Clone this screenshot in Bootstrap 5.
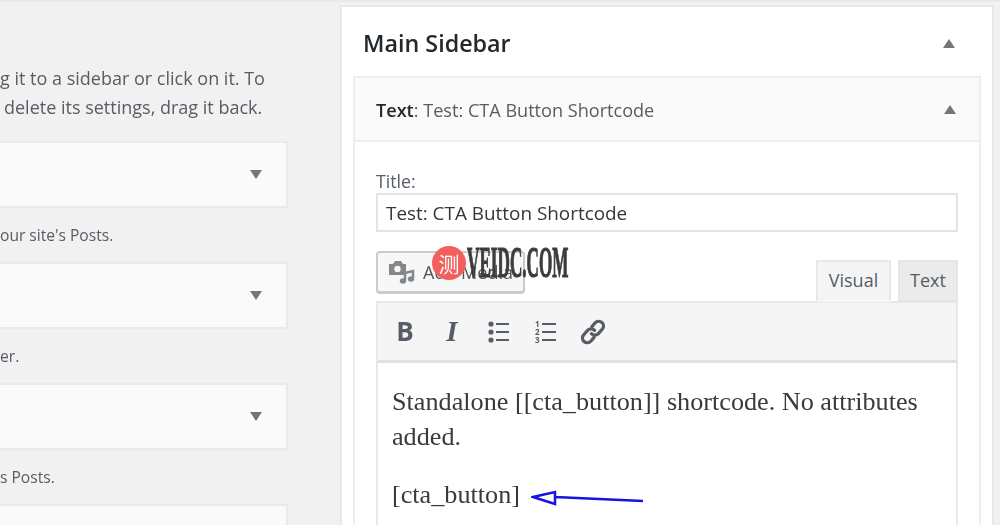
<!DOCTYPE html>
<html lang="en">
<head>
  <meta charset="UTF-8" />
  <meta name="viewport" content="width=device-width, initial-scale=1" />
  <title>Widgets</title>
  <link href="https://cdn.jsdelivr.net/npm/bootstrap@5.3.0/dist/css/bootstrap.min.css" rel="stylesheet" />
  <style>
    body {
      background: #f1f1f1;
      font-family: "Open Sans", sans-serif;
      color: #555d66;
      height: 525px;
      overflow: hidden;
      position: relative;
      border-top: 2px solid #e8e8e8;
      filter: blur(.4px);
    }
    .left-col { width: 340px; height: 523px; overflow: hidden; flex: none; }
    .intro-text { font-size: 18px; line-height: 29px; padding: 62px 0 0 0; height: 139px; margin: 0; white-space: nowrap; }
    .avail-box {
      width: 288px; height: 67px; background: #fafafa;
      border: 2px solid #eaeaea; border-left: 0;
      padding-right: 24px;
    }
    .avail-desc { font-size: 15.6px; height: 54px; line-height: 54px; margin: 0; white-space: nowrap; }
    .tri-down { width: 0; height: 0; border: 6px solid transparent; border-top: 9px solid #72777c; border-bottom: 0; }
    .tri-up { width: 0; height: 0; border: 6px solid transparent; border-bottom: 9px solid #72777c; border-top: 0; }
    .sidebar-panel {
      width: 654px; height: 520px; margin-top: 3px; flex: none; overflow: hidden;
      background: #fff; border: 2px solid #e8e8e8; border-bottom: 0;
      padding: 0 11px;
    }
    .sidebar-head { height: 69px; padding: 3px 26px 0 10px; }
    .sidebar-head h2 { font-size: 23.3px; font-weight: 600; color: #23282d; margin: 0; padding-top: 1px; }
    .widget-panel { border: 2px solid #eee; border-bottom: 0; height: 449px; overflow: hidden; }
    .widget-top { height: 64px; background: #fafafa; border-bottom: 2px solid #eee; padding: 0 23px 0 21px; font-size: 18.1px; }
    .widget-top strong { color: #23282d; font-weight: 600; }
    .widget-top-text { padding-top: 3px; }
    .widget-body { padding: 27px 21px 0; }
    .field-label { font-size: 17.8px; line-height: 24px; margin: 0; display: block; }
    .title-input {
      border: 2px solid #e4e4e4; border-radius: 0; height: 39px; padding: 1px 8px 0;
      font-size: 18.9px; color: #32373c; background: #fff;
    }
    .title-input:focus { border-color: #e4e4e4; box-shadow: none; color: #32373c; }
    .media-row { height: 69px; }
    .media-btn {
      width: 149px; height: 42px; margin-top: 19px; border: 2px solid #ccc; border-radius: 4px;
      background: #f7f7f7; color: #555; font-size: 18px; padding: 0 10px; box-shadow: 0 1px 0 #ccc;
      white-space: nowrap;
    }
    .tab-item { height: 42px; border: 2px solid #e8e8e8; font-size: 18px; color: #555d66; line-height: 37px; margin-bottom: -1px; position: relative; text-align: center; }
    .tab-on { width: 75px; background: #f5f5f5; border-bottom-color: #f5f5f5; z-index: 1; }
    .tab-off { width: 60px; background: #ebebeb; margin-left: 7px; border-color: #e6e6e6; }
    .editor-bar {
      height: 62px; background: #f5f5f5; border: 2px solid #e8e8e8; border-bottom: 3px solid #e0e0e0;
      padding-left: 15px; gap: 23px;
    }
    .bar-icon { width: 24px; height: 24px; color: #555d66; line-height: 22px; text-align: center; flex: none; }
    .bar-b { font-weight: 700; font-size: 26px; }
    .bar-i { font-family: "Liberation Serif", serif; font-style: italic; font-weight: 700; font-size: 29px; }
    .bar-link { width: 26px; height: 26px; margin-left: -1px; }
    .editor-text { border-left: 2px solid #e8e8e8; border-right: 2px solid #e8e8e8; padding: 21px 14px 0; font-family: "Liberation Serif", serif; font-size: 26.2px; line-height: 35px; color: #3a3a3a; height: 200px; }
    .editor-text p { margin: 0 0 23px; }
    .arrow-mark { vertical-align: top; margin: 11px 0 0 11px; }
    .stamp { position: absolute; left: 432px; top: 243px; height: 36px; pointer-events: none; }
    .stamp-dot { width: 34px; height: 34px; border-radius: 50%; background: #f25f5c; color: #fff; font: 21px/34px "Noto Sans CJK SC", sans-serif; text-align: center; flex: none; }
    .stamp-word { font: 700 44px/34px "Liberation Serif", serif; color: #3c3c3c; -webkit-text-stroke: 1.2px #3c3c3c; transform: scaleX(.39); transform-origin: left center; white-space: nowrap; margin-left: 1px; }
  </style>
</head>
<body>
  <div class="d-flex">
    <div class="left-col">
      <p class="intro-text">g it to a sidebar or click on it. To<br><span class="ms-1">delete its settings, drag it back.</span></p>
      <div class="avail-box d-flex align-items-center justify-content-end"><span class="tri-down"></span></div>
      <p class="avail-desc">our site's Posts.</p>
      <div class="avail-box d-flex align-items-center justify-content-end"><span class="tri-down"></span></div>
      <p class="avail-desc">er.</p>
      <div class="avail-box d-flex align-items-center justify-content-end"><span class="tri-down"></span></div>
      <p class="avail-desc">s Posts.</p>
      <div class="avail-box"></div>
    </div>

    <div class="sidebar-panel">
      <div class="sidebar-head d-flex align-items-center justify-content-between">
        <h2>Main Sidebar</h2>
        <span class="tri-up"></span>
      </div>
      <div class="widget-panel">
        <div class="widget-top d-flex align-items-center justify-content-between">
          <span class="widget-top-text"><strong>Text</strong>: Test: CTA Button Shortcode</span>
          <span class="tri-up"></span>
        </div>
        <div class="widget-body">
          <label class="field-label" for="wtitle">Title:</label>
          <input id="wtitle" class="form-control title-input" value="Test: CTA Button Shortcode" />
          <div class="media-row d-flex justify-content-between">
            <button class="btn media-btn d-flex align-items-center gap-2" type="button">
              <svg width="27" height="26" viewBox="0 0 27 26">
                <path fill="#82878c" d="M1 5h4l2-3h6l2 3h3v11H1z"/>
                <circle cx="9.500" cy="10" r="3.200" fill="#f7f7f7"/>
                <path fill="none" stroke="#82878c" stroke-width="2.500" d="M17 21V14l8-2v7"/>
                <ellipse cx="15" cy="22" rx="3.200" ry="2.800" fill="#82878c"/>
                <ellipse cx="23" cy="20" rx="3.200" ry="2.800" fill="#82878c"/>
              </svg>
              <span>Add Media</span>
            </button>
            <div class="d-flex align-items-end">
              <div class="tab-item tab-on">Visual</div>
              <div class="tab-item tab-off">Text</div>
            </div>
          </div>
          <div class="editor-bar d-flex align-items-center">
            <span class="bar-icon bar-b">B</span>
            <span class="bar-icon bar-i">I</span>
            <svg class="bar-icon" viewBox="0 0 24 24">
              <g fill="#555d66"><circle cx="4" cy="4" r="2.600"/><circle cx="4" cy="12" r="2.600"/><circle cx="4" cy="20" r="2.600"/></g>
              <path stroke="#555d66" stroke-width="2" d="M9 4h13M9 12h13M9 20h13"/>
            </svg>
            <svg class="bar-icon" viewBox="0 0 24 24" overflow="visible">
              <path stroke="#555d66" stroke-width="2" d="M8 4h14M8 12h14M8 20h14"/>
              <text x="1" y="7" font-size="8" font-weight="700" fill="#555d66" font-family="Open Sans">1</text>
              <text x="1" y="15" font-size="8" font-weight="700" fill="#555d66" font-family="Open Sans">2</text>
              <text x="1" y="23" font-size="8" font-weight="700" fill="#555d66" font-family="Open Sans">3</text>
            </svg>
            <svg class="bar-icon bar-link" viewBox="0 0 24 24">
              <g fill="none" stroke="#555d66" stroke-width="3" stroke-linecap="round">
                <path d="M11 7l3-3.500a4.400 4.400 0 0 1 6.500 6l-3.500 4a4.400 4.400 0 0 1-6.500 0"/>
                <path d="M13 17l-3 3.500a4.400 4.400 0 0 1-6.500-6l3.500-4a4.400 4.400 0 0 1 6.500 0"/>
              </g>
            </svg>
          </div>
          <div class="editor-text">
            <p>Standalone [[cta_button]] shortcode. No attributes added.</p>
            <p>[cta_button]<svg class="arrow-mark" width="116" height="22" viewBox="0 0 116 22">
              <path fill="none" stroke="#1414e6" stroke-width="2.500" d="M2 9l22-5v12zM24 9l88 4"/>
            </svg></p>
          </div>
        </div>
      </div>
    </div>
  </div>

  <div class="stamp d-flex align-items-center">
    <div class="stamp-dot">测</div>
    <div class="stamp-word">VEIDC.COM</div>
  </div>

  <script src="https://cdn.jsdelivr.net/npm/bootstrap@5.3.0/dist/js/bootstrap.bundle.min.js"></script>
</body>
</html>
